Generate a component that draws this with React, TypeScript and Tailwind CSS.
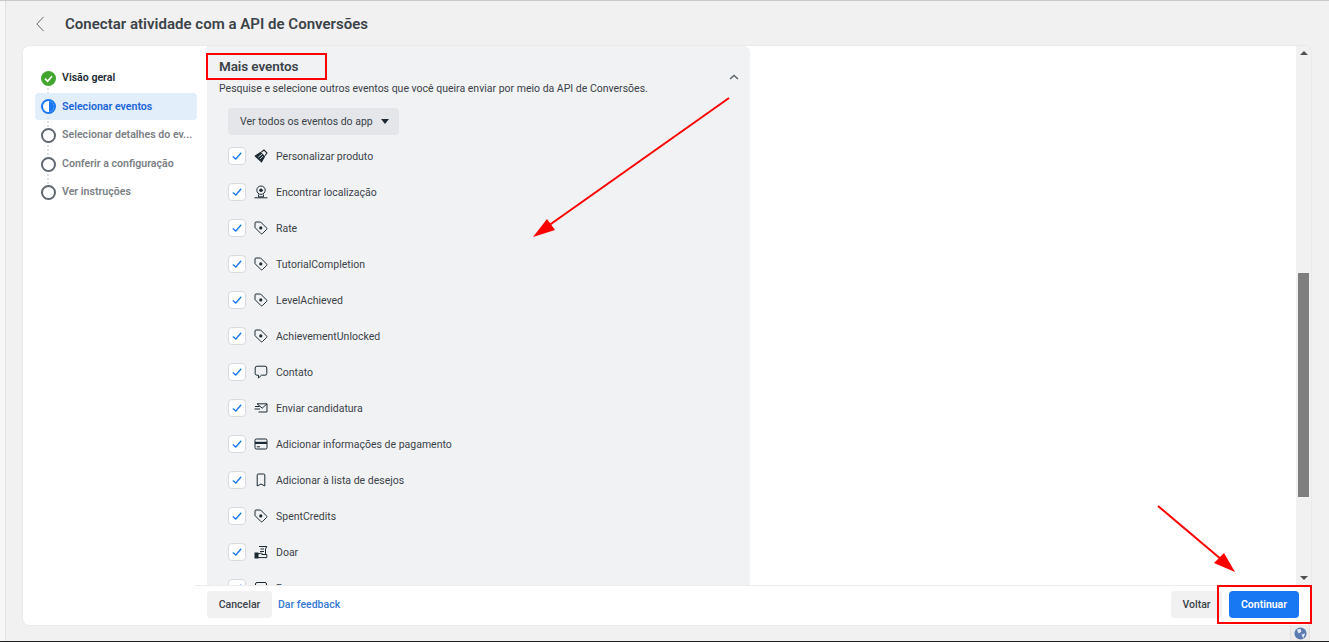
import React from "react";

const cls = "w-[14px] h-[14px]";
const ink = "#1c2b33";

const Tag = () => (
  <svg viewBox="0 0 14 14" className={cls} fill="none" stroke={ink} strokeWidth="1">
    <path d="M1 2 Q1 1 2 1 H6.6 L12.7 7.1 Q13.2 7.7 12.7 8.3 L8.3 12.7 Q7.7 13.2 7.1 12.7 L1 6.6 Z" />
    <circle cx="6.8" cy="6.9" r="1.6" fill={ink} stroke="none" />
  </svg>
);
const Brush = () => (
  <svg viewBox="0 0 14 14" className={cls} fill="none" stroke={ink} strokeWidth="1.1">
    <path d="M6.5 3.5 L10.5 7.5 L7.5 12.8 L1.2 7 Z" fill={ink} />
    <path d="M4.2 8.2 L8 5.2 M6 10 L9 7" stroke="#f1f2f4" strokeWidth="0.8" />
    <path d="M7.5 3 L10 1 L13 4 L11 6.8" />
  </svg>
);
const Pin = () => (
  <svg viewBox="0 0 14 14" className={cls} fill="none" stroke={ink} strokeWidth="1">
    <circle cx="7" cy="5.2" r="4.2" />
    <circle cx="7" cy="5.2" r="1.8" fill={ink} stroke="none" />
    <path d="M4.5 9.5 V11.8 H9.5 V9.5" />
    <path d="M0.5 12.8 H13.5" />
  </svg>
);
const Chat = () => (
  <svg viewBox="0 0 14 14" className={cls} fill="none" stroke={ink} strokeWidth="1">
    <path d="M3 1.2 H11 Q12.8 1.2 12.8 3 V8.6 Q12.8 10.2 11 10.2 H7.5 L4.5 13 V10.2 H3 Q1.2 10.2 1.2 8.6 V3 Q1.2 1.2 3 1.2 Z" />
  </svg>
);
const Mail = () => (
  <svg viewBox="0 0 14 14" className={cls} fill="none" stroke={ink} strokeWidth="1">
    <path d="M3 2.8 H13 V11 H4.5" />
    <path d="M3 2.8 L8.2 7.2 L13 2.8" />
    <path d="M1 5.5 H5.5 M0.5 8 H6" />
  </svg>
);
const Card = () => (
  <svg viewBox="0 0 14 14" className={cls} fill="none" stroke={ink} strokeWidth="1">
    <rect x="1" y="2" width="12" height="10" rx="1.3" />
    <rect x="1" y="4.8" width="12" height="2.2" fill={ink} stroke="none" />
    <path d="M2.8 9.8 H6" />
  </svg>
);
const Bookmark = () => (
  <svg viewBox="0 0 14 14" className={cls} fill="none" stroke={ink} strokeWidth="1">
    <path d="M3.2 2 Q3.2 1 4.2 1 H9.8 Q10.8 1 10.8 2 V13 L7 11 L3.2 13 Z" />
  </svg>
);
const Donate = () => (
  <svg viewBox="0 0 14 14" className={cls} fill="none" stroke={ink} strokeWidth="1">
    <path d="M5 1.5 H12.8 L11.5 4 V9.5 H7.5" />
    <path d="M6.5 4 H10 M6 6.5 H10" />
    <rect x="1" y="8" width="3" height="5" fill={ink} />
    <path d="M4 9 L7.5 8 L9 9.5 L12.8 9.5 V12.6 H4" />
  </svg>
);
const Doc = () => (
  <svg viewBox="0 0 14 14" className={cls} fill="none" stroke={ink} strokeWidth="1">
    <rect x="1.5" y="1.5" width="11" height="11" rx="1.5" />
    <path d="M4 4.5 H10" />
  </svg>
);

const rows: [string, React.ReactNode][] = [
  ["Personalizar produto", <Brush />],
  ["Encontrar localização", <Pin />],
  ["Rate", <Tag />],
  ["TutorialCompletion", <Tag />],
  ["LevelAchieved", <Tag />],
  ["AchievementUnlocked", <Tag />],
  ["Contato", <Chat />],
  ["Enviar candidatura", <Mail />],
  ["Adicionar informações de pagamento", <Card />],
  ["Adicionar à lista de desejos", <Bookmark />],
  ["SpentCredits", <Tag />],
  ["Doar", <Donate />],
  ["Programar", <Doc />],
];

const Ring = () => (
  <span className="w-[15px] h-[15px] rounded-full border-2 border-[#5f6770] bg-white shrink-0" />
);

const steps = ["Selecionar detalhes do ev...", "Conferir a configuração", "Ver instruções"];

const Dots = () => (
  <span className="absolute left-[12px] top-[24px] h-[10px] border-l-2 border-dotted border-[#dcdee2]" />
);

export default function App() {
  return (
    <div className="relative w-[1329px] h-[642px] overflow-hidden flex bg-[#f1f1f1] border-t border-t-[#c9c9c9] border-b border-b-[#222222] font-['Roboto',sans-serif] text-[#1c2b33]">
      <aside className="w-[6px] shrink-0 bg-[#f7f7f7] border-r border-r-[#e2e2e2]" />
      <div className="flex-1 flex flex-col min-w-0">
        <header className="h-[45px] shrink-0 flex items-center pl-[29px] pt-[1px]">
          <svg viewBox="0 0 10 18" className="w-[10px] h-[16px]" fill="none" stroke="#606770" strokeWidth="1.1">
            <path d="M9 1 L1.5 9 L9 17" />
          </svg>
          <h1 className="ml-[20px] text-[15px] font-semibold text-[#3b4248] tracking-[0.02px]">Conectar atividade com a API de Conversões</h1>
        </header>

        <div className="flex ml-[17px] w-[1288px] h-[579px] bg-white rounded-[6px] shadow-[0_0_2px_rgba(0,0,0,0.1)] overflow-hidden">
          <nav className="w-[172px] shrink-0 pt-[18px] pl-[12px] flex flex-col">
            <div className="relative h-[28px] flex items-center pl-[6px] gap-[6px]">
              <span className="w-[15px] h-[15px] rounded-full bg-[#42a52e] flex items-center justify-center shrink-0">
                <svg viewBox="0 0 12 12" className="w-[11px] h-[11px]" fill="none" stroke="white" strokeWidth="1.8"><path d="M2.2 6.2 L5 9 L9.8 3.5" /></svg>
              </span>
              <span className="text-[10.6px] font-semibold text-[#1c2b33]">Visão geral</span>
              <Dots />
            </div>
            <div className="relative h-[27px] w-[162px] flex items-center pl-[6px] gap-[6px] bg-[#e3eefb] rounded-[4px] mt-[1px]">
              <span className="w-[15px] h-[15px] rounded-full border-2 border-[#1877f2] shrink-0 overflow-hidden flex justify-end bg-white">
                <span className="w-1/2 h-full bg-[#1877f2]" />
              </span>
              <span className="text-[10.6px] font-semibold text-[#1a64d8]">Selecionar eventos</span>
              <Dots />
            </div>
            {steps.map((s, i) => (
              <div key={s} className={"relative h-[28px] flex items-center pl-[6px] gap-[6px] " + (i < 2 ? "mt-[1px]" : "")}>
                <Ring />
                <span className="text-[10.6px] font-semibold text-[#7b7f85] whitespace-nowrap">{s}</span>
                {i < 2 && <Dots />}
              </div>
            ))}
          </nav>

          <main className="flex-1 flex flex-col min-w-0">
            <div className="flex-1 flex min-h-0">
              <div className="flex-1 pl-[12px] min-w-0">
                <section className="relative w-[543px] h-[539px] overflow-hidden bg-[#f1f2f4] rounded-tr-[6px] pl-[12px]">
                  <h2 className="text-[13.5px] font-semibold text-[#3b4248] mt-[11px] leading-[18px] tracking-[-0.1px]">Mais eventos</h2>
                  <p className="text-[10.5px] text-[#3b4248] mt-[7px] leading-[14px]">Pesquise e selecione outros eventos que você queira enviar por meio da API de Conversões.</p>
                  <svg viewBox="0 0 10 6" className="absolute left-[522px] top-[28px] w-[10px] h-[6px]" fill="none" stroke="#606770" strokeWidth="1.6"><path d="M1 5 L5 1.5 L9 5" /></svg>
                  <button className="mt-[12px] ml-[9px] h-[27px] w-[171px] flex items-center pl-[12px] gap-[8px] rounded-[4px] bg-[#e4e6ea] text-[10.5px] text-[#3b4248]">
                    Ver todos os eventos do app
                    <span className="w-0 h-0 border-x-[4.5px] border-x-transparent border-t-[5px] border-t-[#1c2b33]" />
                  </button>
                  <ul className="mt-[4px] ml-[9px]">
                    {rows.map(([label, icon]) => (
                      <li key={label} className="h-[36px] flex items-center">
                        <span className="w-[18px] h-[18px] mb-[2px] rounded-[4px] bg-white border border-[#d8dadf] flex items-center justify-center shrink-0">
                          <svg viewBox="0 0 12 12" className="w-[12px] h-[12px]" fill="none" stroke="#1877f2" strokeWidth="1.3"><path d="M1.8 6.5 L4.8 9 L10.2 2.8" /></svg>
                        </span>
                        <span className="ml-[8px] w-[14px] mb-[2px] flex justify-center shrink-0">{icon}</span>
                        <span className="ml-[8px] text-[10.5px] text-[#3b4248]">{label}</span>
                      </li>
                    ))}
                  </ul>
                </section>
              </div>
              <div className="w-[15px] shrink-0 bg-[#f1f1f1] flex flex-col items-center relative">
                <span className="mt-[5px] w-0 h-0 border-x-[4px] border-x-transparent border-b-[4px] border-b-[#505050]" />
                <span className="absolute top-[227px] left-[2px] w-[11px] h-[224px] bg-[#7f7f7f]" />
                <span className="absolute bottom-[5px] left-[3.5px] w-0 h-0 border-x-[4px] border-x-transparent border-t-[4px] border-t-[#505050]" />
              </div>
            </div>
            <footer className="h-[40px] shrink-0 bg-white border-t border-t-[#ececec] flex items-center pl-[12px] pr-[12px] pb-[2px]">
              <button className="h-[27px] w-[65px] rounded-[4px] bg-[#f1f1f1] text-[10.5px] font-medium text-[#3b4248]">Cancelar</button>
              <a className="ml-[6px] text-[10.5px] font-medium text-[#3578d4]">Dar feedback</a>
              <button className="ml-auto h-[27px] w-[51px] rounded-[4px] bg-[#f1f1f1] text-[10.5px] font-medium text-[#3b4248]">Voltar</button>
              <button className="ml-[7px] h-[27px] w-[70px] rounded-[4px] bg-[#1877f2] text-[10.5px] font-semibold text-white">Continuar</button>
            </footer>
          </main>
        </div>

        <div className="flex justify-end pr-[19px]">
          <span className="w-[20px] h-[16px] flex items-center justify-center bg-[#ebebeb] border-x border-x-[#e0e0e0]">
            <svg viewBox="0 0 14 14" className="w-[13px] h-[13px]"><circle cx="7" cy="7" r="6.5" fill="#5b7bb0" /><path d="M3 3 L7 2 L8 5 L5 7 Z M8 8 L12 7 L10 12 Z" fill="#e6ecf5" /></svg>
          </span>
        </div>
      </div>

      {/* Annotation overlays */}
      <div className="absolute left-[206px] top-[52px] w-[121px] h-[27px] border-2 border-[#ff0000]" />
      <div className="absolute left-[1217px] top-[584px] w-[95px] h-[39px] border-2 border-[#ff0000]" />
      <svg className="absolute left-0 top-[-1px] w-[1329px] h-[642px] pointer-events-none" viewBox="0 0 1329 642" fill="none">
        <path d="M729 98 L548 226" stroke="#ff0000" strokeWidth="2" />
        <path d="M533 237 L547 219 L555 230 Z" fill="#ff0000" />
        <path d="M1158 506 L1222 560" stroke="#ff0000" strokeWidth="2" />
        <path d="M1235 572 L1214 563 L1224 553 Z" fill="#ff0000" />
      </svg>
    </div>
  );
}
